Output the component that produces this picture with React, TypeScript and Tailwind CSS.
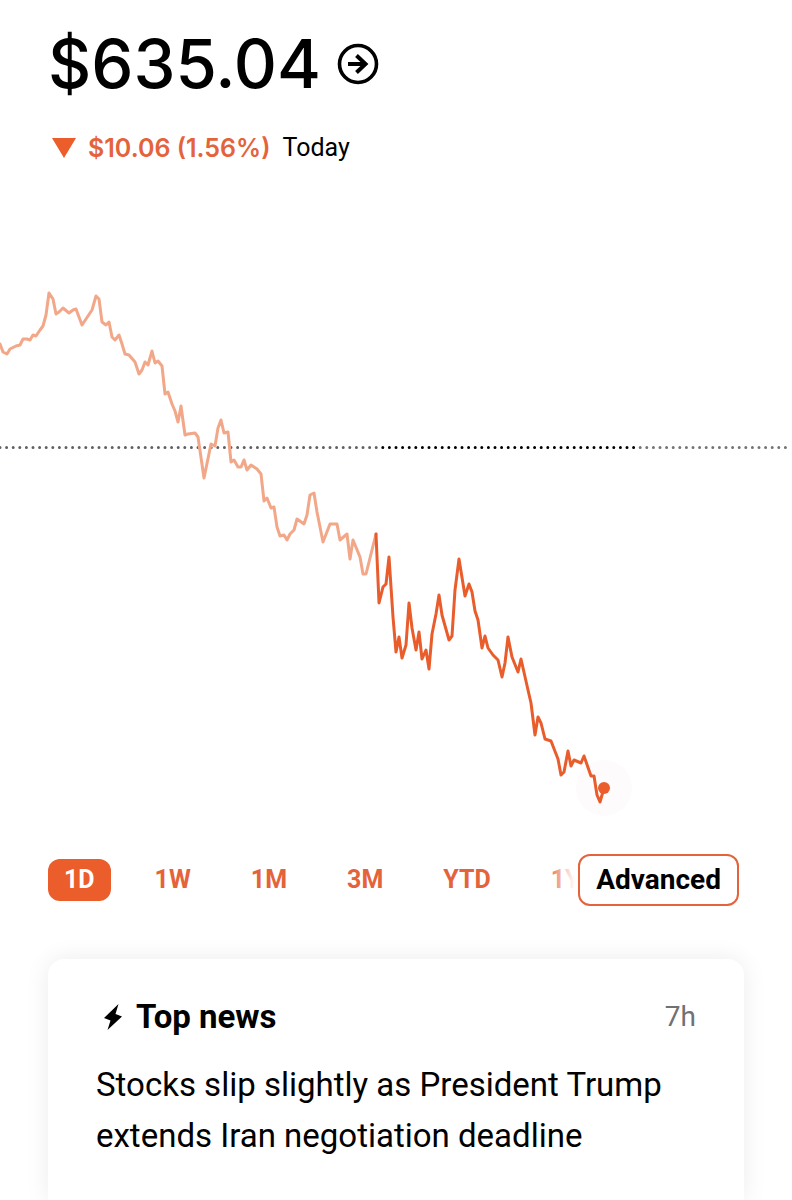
import { useState } from "react"

const RANGES = ["1D", "1W", "1M", "3M", "YTD", "1Y"]

const PRE_MARKET =
  "0,344 3,352 7,354 10,349 16,346 20,345 23,339 27,339 30,340 33,335 36,336 40,330 43,326 46,315 49,293 53,299 56,314 59,312 63,308 69,313 73,310 76,309 82,325 86,319 92,310 96,296 99,299 102,322 106,325 109,322 112,337 115,340 119,335 122,344 125,354 129,355 135,362 139,374 142,370 145,362 148,365 152,351 155,363 158,361 162,366 165,394 168,392 172,404 175,411 178,422 181,406 185,435 188,434 195,433 198,437 204,478 211,444 215,446 218,428 221,420 224,433 228,432 231,462 234,460 238,467 241,467 244,460 247,470 251,465 257,469 261,474 264,501 267,498 271,508 274,507 277,527 280,536 284,535 287,540 290,534 294,530 297,519 304,524 307,515 310,495 314,493 317,512 323,542 330,524 337,524 340,540 347,534 350,559 353,540 360,557 363,574 366,574 372,550 376,534"

const MARKET =
  "376,534 379,603 383,587 386,584 389,557 393,617 396,652 399,637 402,658 406,645 409,603 412,628 416,650 419,632 422,659 426,650 429,669 432,634 436,614 439,595 442,615 449,640 452,636 455,590 459,559 465,596 469,584 472,592 475,611 478,620 482,648 485,636 488,648 493,655 498,660 502,677 505,663 508,637 512,657 518,672 521,659 528,690 531,703 535,735 538,717 541,723 545,739 551,741 558,759 561,775 564,772 568,751 571,766 574,760 581,763 584,756 591,776 594,776 597,795 600,802 604,788"

function PriceChart() {
  return (
    <svg viewBox="0 200 792 630" className="mt-9 block w-full" role="img" aria-label="Price today" fill="none">
      <circle cx="604" cy="788" r="28" fill="#FEFBFC" />

      {/* Previous close, darker during market hours */}
      <g strokeWidth="3" strokeLinecap="round" strokeDasharray="0 6.6">
        <path d="M0 447.5H377" stroke="#606166" />
        <path d="M382.8 447.5H634" stroke="#000000" />
        <path d="M640.2 447.5H786" stroke="#737478" />
      </g>

      <g strokeWidth="3" strokeLinecap="round" strokeLinejoin="round">
        <polyline points={PRE_MARKET} stroke="#F2A788" />
        <polyline points={MARKET} stroke="#E85D2B" />
      </g>

      <circle cx="604" cy="788" r="6" fill="#EB5D2A" />
    </svg>
  )
}

export default function App() {
  const [range, setRange] = useState("1D")

  return (
    <main className="flex min-h-screen flex-col overflow-hidden bg-white font-['Roboto',sans-serif] text-black">
      <header className="px-12 pt-6">
        <div className="flex items-center gap-4">
          <h1 className="font-['Inter',sans-serif] text-[67px] font-medium leading-[80px]">$635.04</h1>
          <button type="button" aria-label="Show details">
            <svg className="size-[42px]" viewBox="0 0 42 42" fill="none" stroke="currentColor">
              <circle cx="21" cy="21" r="18.5" strokeWidth="3.6" />
              <path d="M11 21H28.5M19.5 12.5L28.500 21L19.500 29.500" strokeWidth="4" />
            </svg>
          </button>
        </div>

        <p className="mt-7 flex items-center gap-3 pl-1 text-[25px] leading-8">
          <svg className="h-5 w-6" viewBox="0 0 24 20" fill="#EB5D2A" aria-hidden="true">
            <path d="M0 0H24L12 20Z" />
          </svg>
          <span className="font-['Inter',sans-serif] font-semibold text-[#E4633B]">$10.06 (1.56%)</span>
          <span>Today</span>
        </p>
      </header>

      <PriceChart />

      <div className="mt-6 flex items-center pl-12 pr-[53px]">
        <nav aria-label="Chart range" className="relative min-w-0 flex-1 overflow-hidden">
          <div className="flex gap-7">
            {RANGES.map((item) => (
              <button
                key={item}
                type="button"
                aria-pressed={item === range}
                onClick={() => setRange(item)}
                className={`h-[42px] shrink-0 rounded-xl px-4 text-[25px] font-bold leading-8 ${
                  item === range ? "bg-[#EB5D2A] text-white" : "text-[#E4633B]"
                }`}
              >
                {item}
              </button>
            ))}
          </div>
          <div className="pointer-events-none absolute inset-y-0 right-0 w-8 bg-gradient-to-r from-white/0 to-white to-90%" />
        </nav>
        <button
          type="button"
          className="h-[52px] shrink-0 rounded-xl border-2 border-[#E4633B] px-4 text-[28px] font-bold leading-8"
        >
          Advanced
        </button>
      </div>

      <article className="mx-12 mt-[53px] flex-1 rounded-t-2xl bg-white px-12 pt-9 shadow-[0_0_24px_rgba(0,0,0,0.08)]">
        <div className="flex items-center justify-between">
          <h2 className="flex items-center gap-3.5 pl-2 text-[33px] font-bold leading-[44px]">
            <svg className="h-[26px] w-[18px]" viewBox="0 0 18 26" fill="currentColor" aria-hidden="true">
              <path d="M14.500 0L0 14L6.500 16.500L3.500 26L18 12.500L11.500 10Z" />
            </svg>
            Top news
          </h2>
          <time className="text-[28px] leading-8 text-[#6F7176]">7h</time>
        </div>
        <p className="mt-5 text-[33px] leading-[51px]">Stocks slip slightly as President Trump extends Iran negotiation deadline</p>
      </article>
    </main>
  )
}
